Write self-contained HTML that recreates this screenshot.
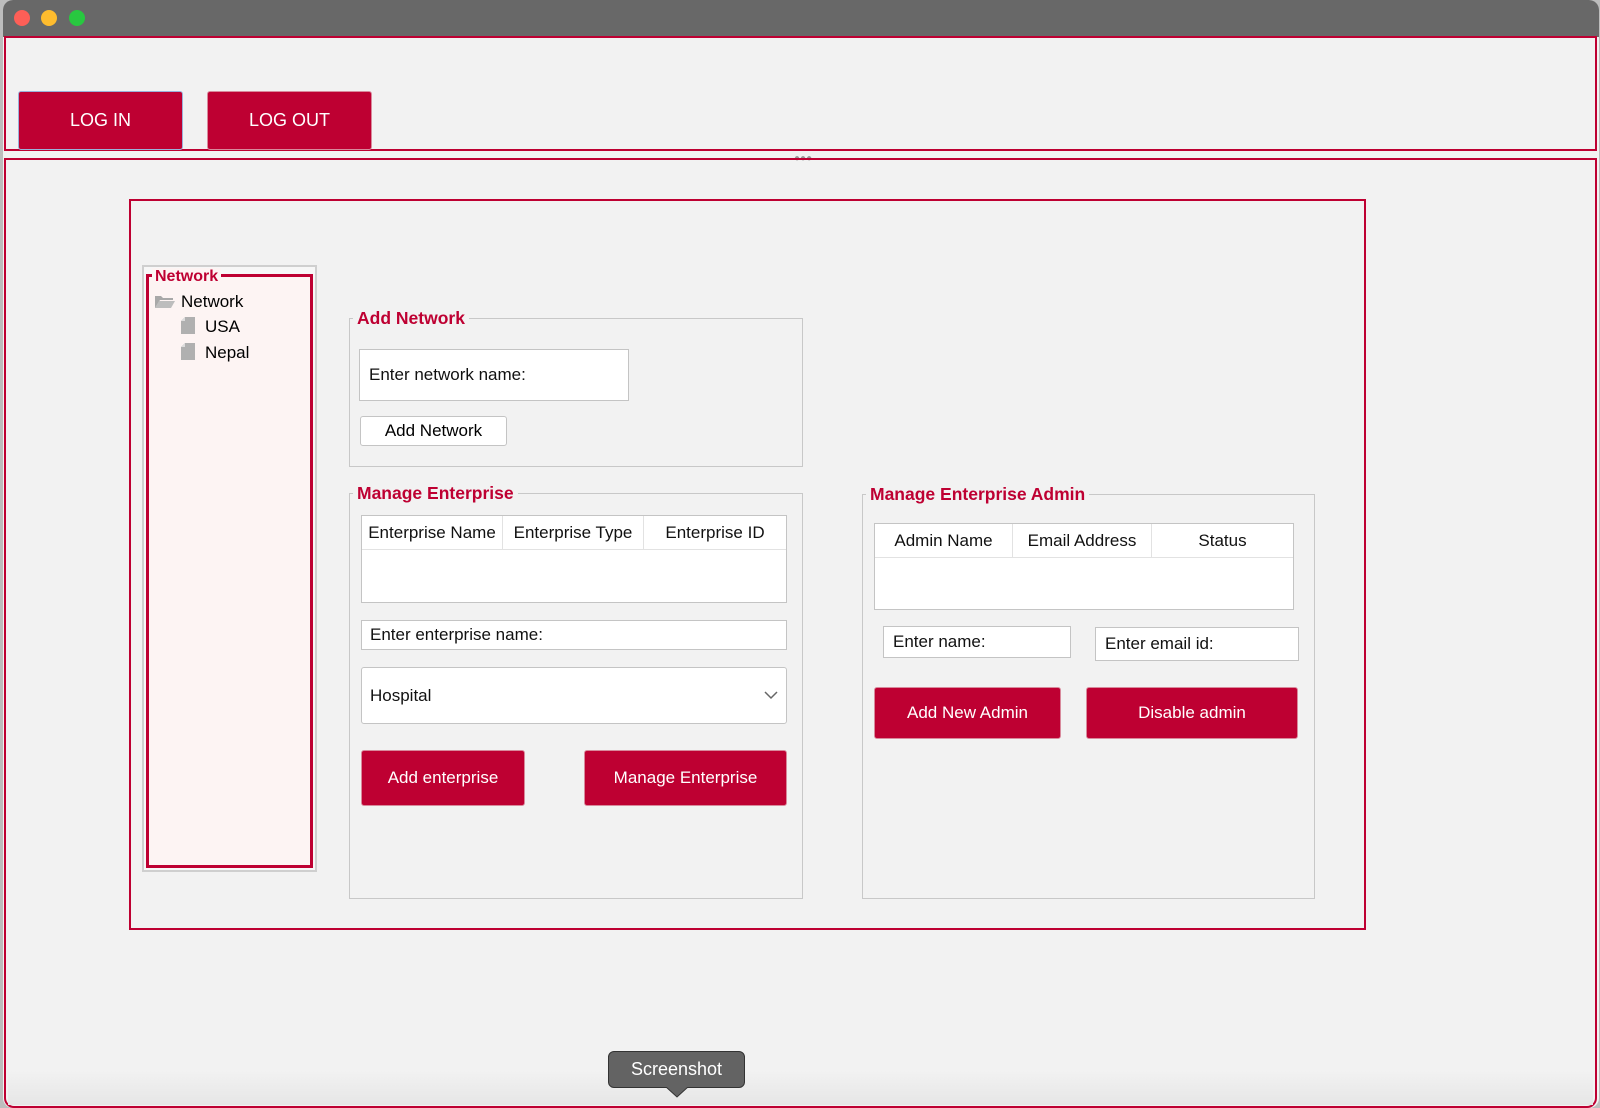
<!DOCTYPE html>
<html><head><meta charset="utf-8"><style>
*{box-sizing:border-box;margin:0;padding:0}
body{width:1600px;height:1108px;background:#bdbdbd;font-family:"Liberation Sans",sans-serif;position:relative;overflow:hidden}
.a{position:absolute}
.win{left:3px;top:0;width:1596px;height:1108px;background:#f2f2f2;border-radius:10px;overflow:hidden}
.title{left:0;top:0;width:1596px;height:37px;background:#686868}
.dot{width:16px;height:16px;border-radius:50%;top:10px}
.red{border:3px solid #be0032}
.btn{background:#be0032;color:#fff;text-align:center;border-radius:3px;border:1px solid #d88a9c}
.grp{border:1px solid #c8c8c8}
.gt{background:#f2f2f2;color:#be0032;font-weight:bold;font-size:17.5px;padding:0 4px;line-height:18px}
.fld{background:#fff;border:1px solid #c4c4c4;font-size:17px;color:#111}
.th{font-size:17px;color:#111;text-align:center;line-height:33px;border-right:1px solid #e2e2e2;border-bottom:1px solid #e2e2e2}
</style></head><body>
<div class="a win">
 <div class="a title"></div>
</div>
<div class="a dot" style="left:14px;background:#fe5f57"></div>
<div class="a dot" style="left:41px;background:#febc2e"></div>
<div class="a dot" style="left:69px;background:#28c840"></div>

<div class="a red" style="left:4px;top:36px;width:1593px;height:115px;border-width:2px"></div>
<div class="a btn" style="left:18px;top:91px;width:165px;height:59px;line-height:57px;font-size:18px;border-color:#9bb2da">LOG IN</div>
<div class="a btn" style="left:207px;top:91px;width:165px;height:59px;line-height:57px;font-size:18px">LOG OUT</div>
<div class="a" style="left:794px;top:153px;font-size:10px;color:#999;letter-spacing:0px">●●●</div>

<div class="a red" style="left:4px;top:158px;width:1593px;height:950px;border-width:2px;border-radius:0 0 10px 10px"></div>
<div class="a" style="left:8px;top:1070px;width:1585px;height:35px;background:linear-gradient(#f2f2f200,#e6e6e6)"></div>

<div class="a red" style="left:129px;top:199px;width:1237px;height:731px;border-width:2px"></div>

<!-- tree -->
<div class="a" style="left:142px;top:265px;width:175px;height:607px;border:2px solid #cfcfcf;background:#f7f7f7"></div>
<div class="a red" style="left:146px;top:274px;width:167px;height:594px;background:#fdf4f3"></div>
<div class="a gt" style="left:152px;top:268px;background:#fdf4f3;padding:0 3px;font-size:16px">Network</div>
<svg class="a" style="left:154px;top:293px" width="22" height="16"><path d="M1 3h6l2 2h10v2H6L1 15z" fill="#a8a8a8"/><path d="M5 8h16l-4 7H1z" fill="#bdbdbd"/></svg>
<div class="a" style="left:181px;top:292px;font-size:17px">Network</div>
<svg class="a" style="left:181px;top:317px" width="14" height="17"><path d="M4 0h10v17H0V4z" fill="#b0b0b0"/><path d="M0 4h4V0z" fill="#ddd"/></svg>
<div class="a" style="left:205px;top:317px;font-size:17px">USA</div>
<svg class="a" style="left:181px;top:343px" width="14" height="17"><path d="M4 0h10v17H0V4z" fill="#b0b0b0"/><path d="M0 4h4V0z" fill="#ddd"/></svg>
<div class="a" style="left:205px;top:343px;font-size:17px">Nepal</div>

<!-- add network -->
<div class="a grp" style="left:349px;top:318px;width:454px;height:149px"></div>
<div class="a gt" style="left:353px;top:309px">Add Network</div>
<div class="a fld" style="left:359px;top:349px;width:270px;height:52px;line-height:50px;padding-left:9px">Enter network name:</div>
<div class="a" style="left:360px;top:416px;width:147px;height:30px;background:#fff;border:1px solid #c4c4c4;border-radius:3px;font-size:17px;text-align:center;line-height:28px">Add Network</div>

<!-- manage enterprise -->
<div class="a grp" style="left:349px;top:493px;width:454px;height:406px"></div>
<div class="a gt" style="left:353px;top:484px">Manage Enterprise</div>
<div class="a fld" style="left:361px;top:515px;width:426px;height:88px"></div>
<div class="a th" style="left:362px;top:516px;width:141px">Enterprise Name</div>
<div class="a th" style="left:503px;top:516px;width:141px">Enterprise Type</div>
<div class="a th" style="left:644px;top:516px;width:142px;border-right:0">Enterprise ID</div>
<div class="a fld" style="left:361px;top:620px;width:426px;height:30px;line-height:28px;padding-left:8px">Enter enterprise name:</div>
<div class="a fld" style="left:361px;top:667px;width:426px;height:57px;line-height:55px;padding-left:8px;border-radius:3px">Hospital</div>
<svg class="a" style="left:764px;top:690px" width="14" height="10"><path d="M1 2l6 6 6-6" stroke="#666" stroke-width="1.5" fill="none"/></svg>
<div class="a btn" style="left:361px;top:750px;width:164px;height:56px;line-height:54px;font-size:17px">Add enterprise</div>
<div class="a btn" style="left:584px;top:750px;width:203px;height:56px;line-height:54px;font-size:17px">Manage Enterprise</div>

<!-- admin -->
<div class="a grp" style="left:862px;top:494px;width:453px;height:405px"></div>
<div class="a gt" style="left:866px;top:485px">Manage Enterprise Admin</div>
<div class="a fld" style="left:874px;top:523px;width:420px;height:87px"></div>
<div class="a th" style="left:875px;top:524px;width:138px">Admin Name</div>
<div class="a th" style="left:1013px;top:524px;width:139px">Email Address</div>
<div class="a th" style="left:1152px;top:524px;width:141px;border-right:0">Status</div>
<div class="a fld" style="left:883px;top:626px;width:188px;height:32px;line-height:30px;padding-left:9px">Enter name:</div>
<div class="a fld" style="left:1095px;top:627px;width:204px;height:34px;line-height:32px;padding-left:9px">Enter email id:</div>
<div class="a btn" style="left:874px;top:687px;width:187px;height:52px;line-height:50px;font-size:17px">Add New Admin</div>
<div class="a btn" style="left:1086px;top:687px;width:212px;height:52px;line-height:50px;font-size:17px">Disable admin</div>

<!-- tooltip -->
<div class="a" style="left:608px;top:1051px;width:137px;height:37px;background:#636363;border:1px solid #333;border-radius:6px;color:#fff;font-size:18px;text-align:center;line-height:35px">Screenshot</div>
<svg class="a" style="left:666px;top:1087px" width="22" height="11"><path d="M0 0l11 10 11-10z" fill="#636363"/><path d="M0 0l11 10 11-10" stroke="#333" fill="none"/></svg>
</body></html>
